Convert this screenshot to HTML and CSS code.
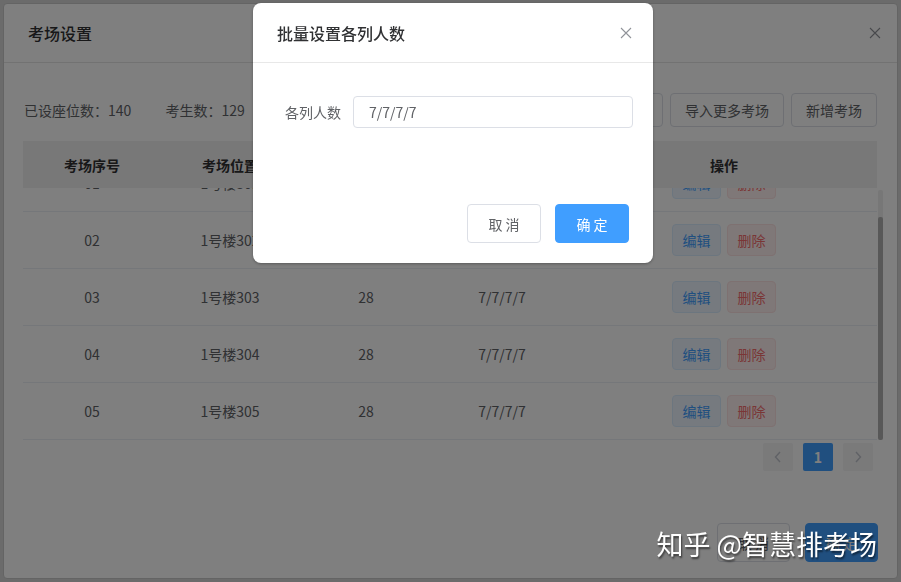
FILE: index.html
```html
<!DOCTYPE html>
<html lang="zh-CN">
<head>
    <meta charset="UTF-8">
    <meta name="viewport" content="width=device-width, initial-scale=1.0">
    <title>考场设置</title>
    <link rel="stylesheet" href="styles.css">
</head>
<body>
    <div class="dialog">
        <div class="dialog-header">
            <span class="dialog-title">考场设置</span>
            <svg class="close-icon" width="12" height="12" viewBox="0 0 12 12"><path d="M1 1L11 11M11 1L1 11"/></svg>
        </div>

        <div class="dialog-body">
            <div class="toolbar">
                <div class="stats">
                    <span>已设座位数：140</span>
                    <span>考生数：129</span>
                </div>
                <div class="actions">
                    <button class="btn">批量设置各列人数</button>
                    <button class="btn">导入更多考场</button>
                    <button class="btn">新增考场</button>
                </div>
            </div>

            <div class="table">
                <div class="row thead">
                    <div>考场序号</div>
                    <div>考场位置</div>
                    <div>座位数</div>
                    <div>各列人数</div>
                    <div>操作</div>
                </div>
                <div class="tbody">
                    <div class="tbody-inner">
                        <div class="row">
                            <div>01</div><div>1号楼301</div><div>28</div><div>7/7/7/7</div>
                            <div class="ops"><button class="op op-edit">编辑</button><button class="op op-del">删除</button></div>
                        </div>
                        <div class="row">
                            <div>02</div><div>1号楼302</div><div>28</div><div>7/7/7/7</div>
                            <div class="ops"><button class="op op-edit">编辑</button><button class="op op-del">删除</button></div>
                        </div>
                        <div class="row">
                            <div>03</div><div>1号楼303</div><div>28</div><div>7/7/7/7</div>
                            <div class="ops"><button class="op op-edit">编辑</button><button class="op op-del">删除</button></div>
                        </div>
                        <div class="row">
                            <div>04</div><div>1号楼304</div><div>28</div><div>7/7/7/7</div>
                            <div class="ops"><button class="op op-edit">编辑</button><button class="op op-del">删除</button></div>
                        </div>
                        <div class="row">
                            <div>05</div><div>1号楼305</div><div>28</div><div>7/7/7/7</div>
                            <div class="ops"><button class="op op-edit">编辑</button><button class="op op-del">删除</button></div>
                        </div>
                    </div>
                    <div class="scrollbar"><div class="thumb"></div></div>
                </div>
            </div>

            <div class="pager">
                <button class="page-btn"><svg width="8" height="12" viewBox="0 0 8 12"><path d="M6 1L1.5 6L6 11"/></svg></button>
                <button class="page-btn active">1</button>
                <button class="page-btn"><svg width="8" height="12" viewBox="0 0 8 12"><path d="M2 1L6.5 6L2 11"/></svg></button>
            </div>
        </div>

        <div class="dialog-footer">
            <button class="btn btn-lg">取 消</button>
            <button class="btn btn-lg btn-primary">确 定</button>
        </div>
    </div>

    <div class="mask"></div>

    <div class="modal">
        <div class="modal-header">
            <span class="modal-title">批量设置各列人数</span>
            <svg class="close-icon" width="12" height="12" viewBox="0 0 12 12"><path d="M1 1L11 11M11 1L1 11"/></svg>
        </div>
        <div class="modal-body">
            <label class="form-label" for="colCount">各列人数</label>
            <input class="form-input" id="colCount" type="text" value="7/7/7/7">
        </div>
        <div class="modal-footer">
            <button class="btn btn-lg">取 消</button>
            <button class="btn btn-lg btn-primary">确 定</button>
        </div>
    </div>

    <div class="watermark">知乎 @智慧排考场</div>
</body>
</html>
```

FILE: styles.css
```css
* {
    box-sizing: border-box;
}

body {
    margin: 0;
    padding: 3px;
    height: 100vh;
    background: #d6d6d6;
    font-family: "Noto Sans CJK SC", "Noto Sans", sans-serif;
    font-size: 14px;
    color: #606266;
    overflow: hidden;
}

button {
    font-family: inherit;
    cursor: pointer;
}

/* big dialog underneath */
.dialog {
    height: 100%;
    background: #fff;
    border: 1px solid #c8c8c8;
    border-radius: 4px;
    display: flex;
    flex-direction: column;
}

.dialog-header {
    height: 59px;
    padding: 0 16px 0 24px;
    border-bottom: 1px solid #e4e4e4;
    display: flex;
    align-items: center;
    justify-content: space-between;
}

.dialog-title {
    font-size: 16px;
    font-weight: 500;
    color: #303133;
}

.close-icon {
    stroke: #909399;
    stroke-width: 1.1;
    fill: none;
}

.dialog-body {
    padding: 30px 20px 0 19px;
}

.toolbar {
    display: flex;
    align-items: center;
    justify-content: space-between;
    height: 34px;
}

.stats {
    padding-left: 1px;
}

.stats span {
    margin-right: 31px;
}

.actions {
    display: flex;
    gap: 7px;
}

.btn {
    height: 34px;
    padding: 0 14px;
    border: 1px solid #dcdfe6;
    border-radius: 4px;
    background: #fff;
    color: #606266;
    font-size: 14px;
}

.btn-lg {
    height: 39px;
    width: 74px;
    padding: 0;
}

.btn-primary {
    background: #409eff;
    border-color: #409eff;
    color: #fff;
}

/* table */
.table {
    margin-top: 14px;
}

.row {
    display: grid;
    grid-template-columns: 138px 138px 134px 138px 1fr;
    height: 57px;
    align-items: center;
    text-align: center;
    border-bottom: 1px solid #ebeef5;
}

.thead {
    height: 47px;
    background: #f0f0f0;
    border-bottom: none;
    font-weight: bold;
    color: #303133;
    position: relative;
    z-index: 1;
}

.tbody {
    height: 252px;
    position: relative;
}

.tbody-inner {
    height: 100%;
    overflow: hidden;
}

.tbody-inner .row:first-child {
    margin-top: -33px;
}

.ops {
    display: flex;
    justify-content: center;
    gap: 6px;
}

.op {
    height: 32px;
    width: 49px;
    padding: 0;
    border-radius: 4px;
    font-size: 14px;
}

.op-edit {
    background: #ecf5ff;
    border: 1px solid #d9ecff;
    color: #409eff;
}

.op-del {
    background: #fef0f0;
    border: 1px solid #fde2e2;
    color: #f56c6c;
}

.scrollbar {
    position: absolute;
    top: 2px;
    bottom: 0;
    right: -6px;
    width: 5px;
    background: #eeeeee;
    border-radius: 2px;
}

.thumb {
    margin-top: 27px;
    height: calc(100% - 27px);
    background: #b0b0b0;
    border-radius: 2px;
}

.pager {
    display: flex;
    justify-content: flex-end;
    gap: 10px;
    margin-top: 3px;
    padding-right: 4px;
}

.page-btn {
    width: 30px;
    height: 28px;
    padding: 0;
    border: none;
    border-radius: 2px;
    background: #f4f4f5;
    display: flex;
    align-items: center;
    justify-content: center;
}

.page-btn svg {
    fill: none;
    stroke: #c0c4cc;
    stroke-width: 1.4;
}

.page-btn.active {
    background: #409eff;
    color: #fff;
    font-size: 14px;
    font-weight: bold;
}

.dialog-footer {
    margin-top: auto;
    padding: 0 19px 16px 0;
    display: flex;
    justify-content: flex-end;
    gap: 15px;
}

.dialog-footer .btn-lg {
    width: 73px;
}

/* overlay + top modal */
.mask {
    position: fixed;
    inset: 0;
    z-index: 10;
    background: rgba(0, 0, 0, 0.5);
}

.modal {
    position: fixed;
    left: 253px;
    top: 3px;
    width: 400px;
    z-index: 11;
    background: #fff;
    border-radius: 8px;
    box-shadow: 0 1px 3px rgba(0, 0, 0, 0.3);
}

.modal-header {
    height: 60px;
    padding: 0 21px 0 24px;
    border-bottom: 1px solid #e8e8e8;
    display: flex;
    align-items: center;
    justify-content: space-between;
}

.modal-title {
    font-size: 16px;
    font-weight: 500;
    color: #303133;
}

.modal-body {
    display: flex;
    align-items: center;
    padding: 33px 20px 56px 20px;
}

.form-label {
    width: 80px;
    padding-right: 12px;
    text-align: right;
    flex-shrink: 0;
}

.form-input {
    flex: 1;
    height: 32px;
    padding: 0 15px;
    border: 1px solid #dcdfe6;
    border-radius: 4px;
    font-family: inherit;
    font-size: 14px;
    color: #606266;
    outline: none;
}

.modal-footer {
    display: flex;
    justify-content: flex-end;
    gap: 14px;
    padding: 20px 24px 20px 0;
}

.watermark {
    position: fixed;
    right: 24px;
    top: 526px;
    z-index: 12;
    line-height: 36px;
    font-size: 27px;
    color: #fff;
    text-shadow: 1px 2px 2px rgba(0, 0, 0, 0.55);
    white-space: nowrap;
}
```
